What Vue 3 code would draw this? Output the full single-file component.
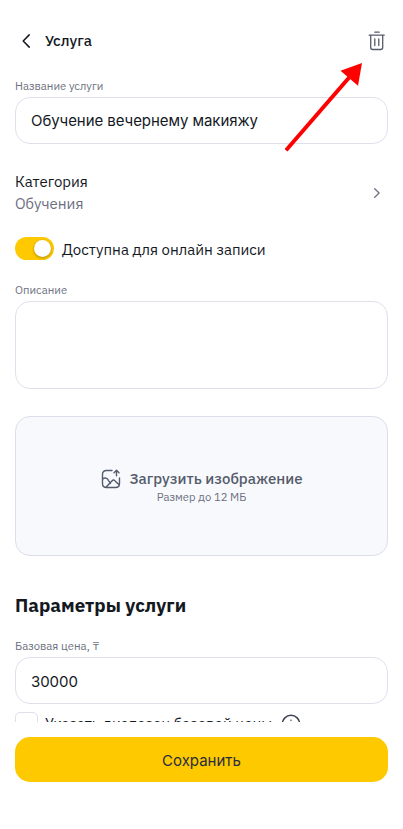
<script setup>
import { ref } from 'vue'

const name = ref('Обучение вечернему макияжу')
const description = ref('')
const price = ref('30000')
const online = ref(true)
</script>

<template>
  <main class="screen">
    <header class="header">
      <svg class="back" viewBox="0 0 10 16" fill="none"><path d="M8.2 1.9 2.2 8l6 6.1" /></svg>
      <h1 class="title">Услуга</h1>
      <svg class="trash" viewBox="0 0 18 20" fill="none">
        <path d="M6.8 1.2h4.4M2.7 4.5v11.9c0 1.2.9 2.1 2.1 2.1h7.8c1.2 0 2.1-.9 2.1-2.1V4.5M1.2 4.2h15M6.8 7.8v6.8M10.8 7.8v6.8" />
      </svg>
    </header>

    <div class="content">
      <label class="label name-label">Название услуги</label>
      <input v-model="name" class="field name" />

      <div class="category">
        <div class="category-text">
          <span class="category-title">Категория</span>
          <span class="category-value">Обучения</span>
        </div>
        <svg class="chevron" viewBox="0 0 8 12" fill="none"><path d="m1.7 1.8 4.4 4.2-4.4 4.2" /></svg>
      </div>

      <div class="switch-row">
        <span class="switch" :class="{ on: online }" @click="online = !online"><i class="knob"></i></span>
        <span class="switch-label">Доступна для онлайн записи</span>
      </div>

      <label class="label about-label">Описание</label>
      <textarea v-model="description" class="field about"></textarea>

      <div class="upload">
        <div class="upload-row">
          <svg class="picture" viewBox="0 0 20 20" fill="none">
            <path d="M11 1.5H5.5c-2.6 0-4 1.4-4 4v9c0 2.6 1.4 4 4 4h9c2.6 0 4-1.4 4-4V9M15.5 6.7V1.4M13 3.7l2.5-2.4L18 3.7M1.6 10.2c2.5-2 4.5-1.2 5.8 1.1l2 3.2M5.2 18l5.7-6.1c1.1-1.2 2.1-1.2 3.2 0l4.2 4" />
          </svg>
          <span class="upload-title">Загрузить изображение</span>
        </div>
        <span class="upload-note">Размер до 12 МБ</span>
      </div>

      <h2 class="section">Параметры услуги</h2>
      <label class="label price-label">Базовая цена, ₸</label>
      <input v-model="price" class="field price" />

      <div class="range">
        <span class="checkbox"></span>
        <span class="range-label">Указать диапазон базовой цены</span>
        <svg class="info" viewBox="0 0 20 20" fill="none">
          <circle cx="10" cy="10" r="8.7" /><path d="M10 6.2v.1M10 9.5v5" />
        </svg>
      </div>
    </div>

    <footer class="footer"><button class="save">Сохранить</button></footer>

    <svg class="arrow" viewBox="0 0 78 89">
      <path d="M1 87.3 65 13.5" stroke="#f00" stroke-width="4" />
      <path d="M77 0 55.5 7.8 73 22.7Z" fill="#f00" />
    </svg>
  </main>
</template>

<style>
body {
  margin: 0;
  background: #fff;
}
</style>

<style scoped>
* {
  box-sizing: border-box;
}
.screen {
  position: relative;
  display: flex;
  flex-direction: column;
  width: 403px;
  height: 829px;
  padding: 0 15px;
  overflow: hidden;
  background: #fff;
  color: #14191f;
  font-family: "IBM Plex Sans", "Noto Sans", sans-serif;
  white-space: nowrap;
}
.header {
  flex: none;
  display: flex;
  align-items: center;
  height: 78px;
  padding: 4px 2px 0 6px;
}
svg {
  flex: none;
  stroke-width: 1.5;
  stroke-linecap: round;
  stroke-linejoin: round;
}
.back {
  width: 10px;
  height: 16px;
  stroke: #14191f;
}
.title {
  margin: 0 auto 0 14px;
  font-size: 15px;
  font-weight: 500;
  letter-spacing: 0.05px;
  line-height: 20px;
}
.trash {
  width: 18px;
  height: 20px;
  stroke: #555b6b;
  stroke-width: 1.3;
}
.content {
  flex: none;
  display: flex;
  flex-direction: column;
  height: 644px;
  overflow: hidden;
}
.label {
  flex: none;
  height: 19px;
  color: #6c7080;
  font-size: 11.25px;
  line-height: 15px;
}
.field {
  flex: none;
  display: block;
  width: 373px;
  height: 47px;
  margin: 0;
  padding: 1px 15px 0;
  border: 1px solid #dfe0ec;
  border-radius: 15px;
  outline: none;
  background: #fff;
  color: #14191f;
  font: 15px/20px Inter, sans-serif;
  letter-spacing: -0.06px;
}
.name {
  padding-top: 0;
}
.category {
  flex: none;
  display: flex;
  align-items: center;
  justify-content: space-between;
  height: 45px;
  margin-top: 26px;
  padding-right: 7px;
}
.category-text {
  display: flex;
  flex-direction: column;
  padding-top: 1px;
  font-size: 15px;
  line-height: 22px;
}
.category-value {
  padding-top: 0.5px;
  color: #6c7080;
}
.chevron {
  width: 8px;
  height: 12px;
  stroke: #6c7080;
  stroke-width: 1.3;
}
.switch-row {
  flex: none;
  display: flex;
  align-items: center;
  gap: 8px;
  height: 23px;
  margin-top: 22px;
}
.switch {
  display: flex;
  width: 39px;
  height: 23px;
  padding: 3px;
  border-radius: 12px;
  background: #dfe0ec;
}
.switch.on {
  justify-content: flex-end;
  background: #ffc900;
}
.knob {
  width: 17px;
  height: 17px;
  border-radius: 50%;
  background: #fff;
  box-shadow: 0 1px 3px #0005;
}
.switch-label {
  padding-top: 1px;
  font-size: 15px;
}
.about-label {
  margin-top: 22px;
}
.about {
  height: 88px;
  resize: none;
}
.upload {
  flex: none;
  display: flex;
  flex-direction: column;
  align-items: center;
  height: 140px;
  margin-top: 27px;
  padding-top: 51px;
  border: 1px solid #dcdee9;
  border-radius: 15px;
  background: #f7f9fd;
}
.upload-row {
  display: flex;
  align-items: center;
  gap: 8px;
  height: 21px;
}
.picture {
  width: 20px;
  height: 20px;
  stroke: #555b6b;
  stroke-width: 1.4;
}
.upload-title {
  margin-right: -1px;
  color: #555b6b;
  font-size: 15px;
  font-weight: 500;
}
.upload-note {
  color: #6c7080;
  font-size: 11.25px;
  line-height: 16px;
}
.section {
  flex: none;
  margin: 37px 0 21px;
  font-size: 18.75px;
  font-weight: 700;
  line-height: 24px;
}
.range {
  flex: none;
  display: flex;
  align-items: center;
  height: 23px;
  margin-top: 8px;
}
.checkbox {
  width: 23px;
  height: 23px;
  border: 1px solid #dfe0ec;
  border-radius: 5px;
}
.range-label {
  margin: 0 9px 0 7px;
  padding-top: 1px;
  font-size: 15px;
  line-height: 20px;
}
.info {
  width: 20px;
  height: 20px;
  stroke: #3d4250;
}
.footer {
  flex: none;
  padding-top: 15px;
}
.save {
  display: block;
  width: 373px;
  height: 45px;
  padding: 2px 0 0;
  border: 0;
  border-radius: 15px;
  background: #ffc900;
  color: #282d3c;
  font: 15px/20px Inter, sans-serif;
}
.arrow {
  position: absolute;
  top: 63px;
  left: 285px;
  width: 78px;
  height: 89px;
  pointer-events: none;
  stroke-linecap: butt;
}
</style>
